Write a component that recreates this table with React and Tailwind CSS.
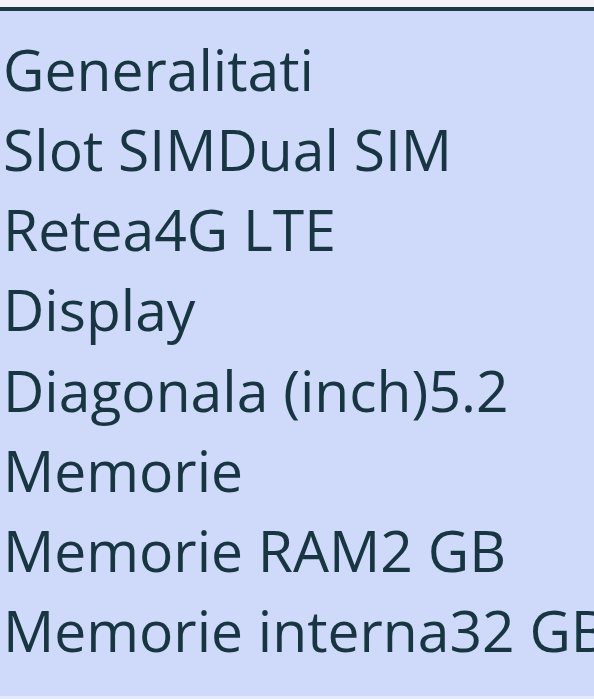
const rows = [
  ["Generalitati", ""],
  ["Slot SIM", "Dual SIM"],
  ["Retea", "4G LTE"],
  ["Display", ""],
  ["Diagonala (inch)", "5.2"],
  ["Memorie", ""],
  ["Memorie RAM", "2 GB"],
  ["Memorie interna", "32 GB"],
];

export default function App() {
  return (
    <div className="h-[699px] w-[594px] overflow-hidden flex flex-col bg-[#f4f2f7] font-['Open_Sans',sans-serif]">
      <div className="h-[7px] shrink-0" />
      <div className="h-[4px] shrink-0 bg-[#1c3a44]" />
      <div className="flex-1 bg-[#cfdafb] pl-[3px] pt-[17.5px] text-[#183641] text-[57px] leading-[80.25px] whitespace-nowrap">
        {rows.map(([a, b]) => (
          <div key={a}>
            <span>{a}</span>
            <span>{b}</span>
          </div>
        ))}
      </div>
      <div className="h-[3px] shrink-0 bg-[#e4e9fb]" />
    </div>
  );
}
